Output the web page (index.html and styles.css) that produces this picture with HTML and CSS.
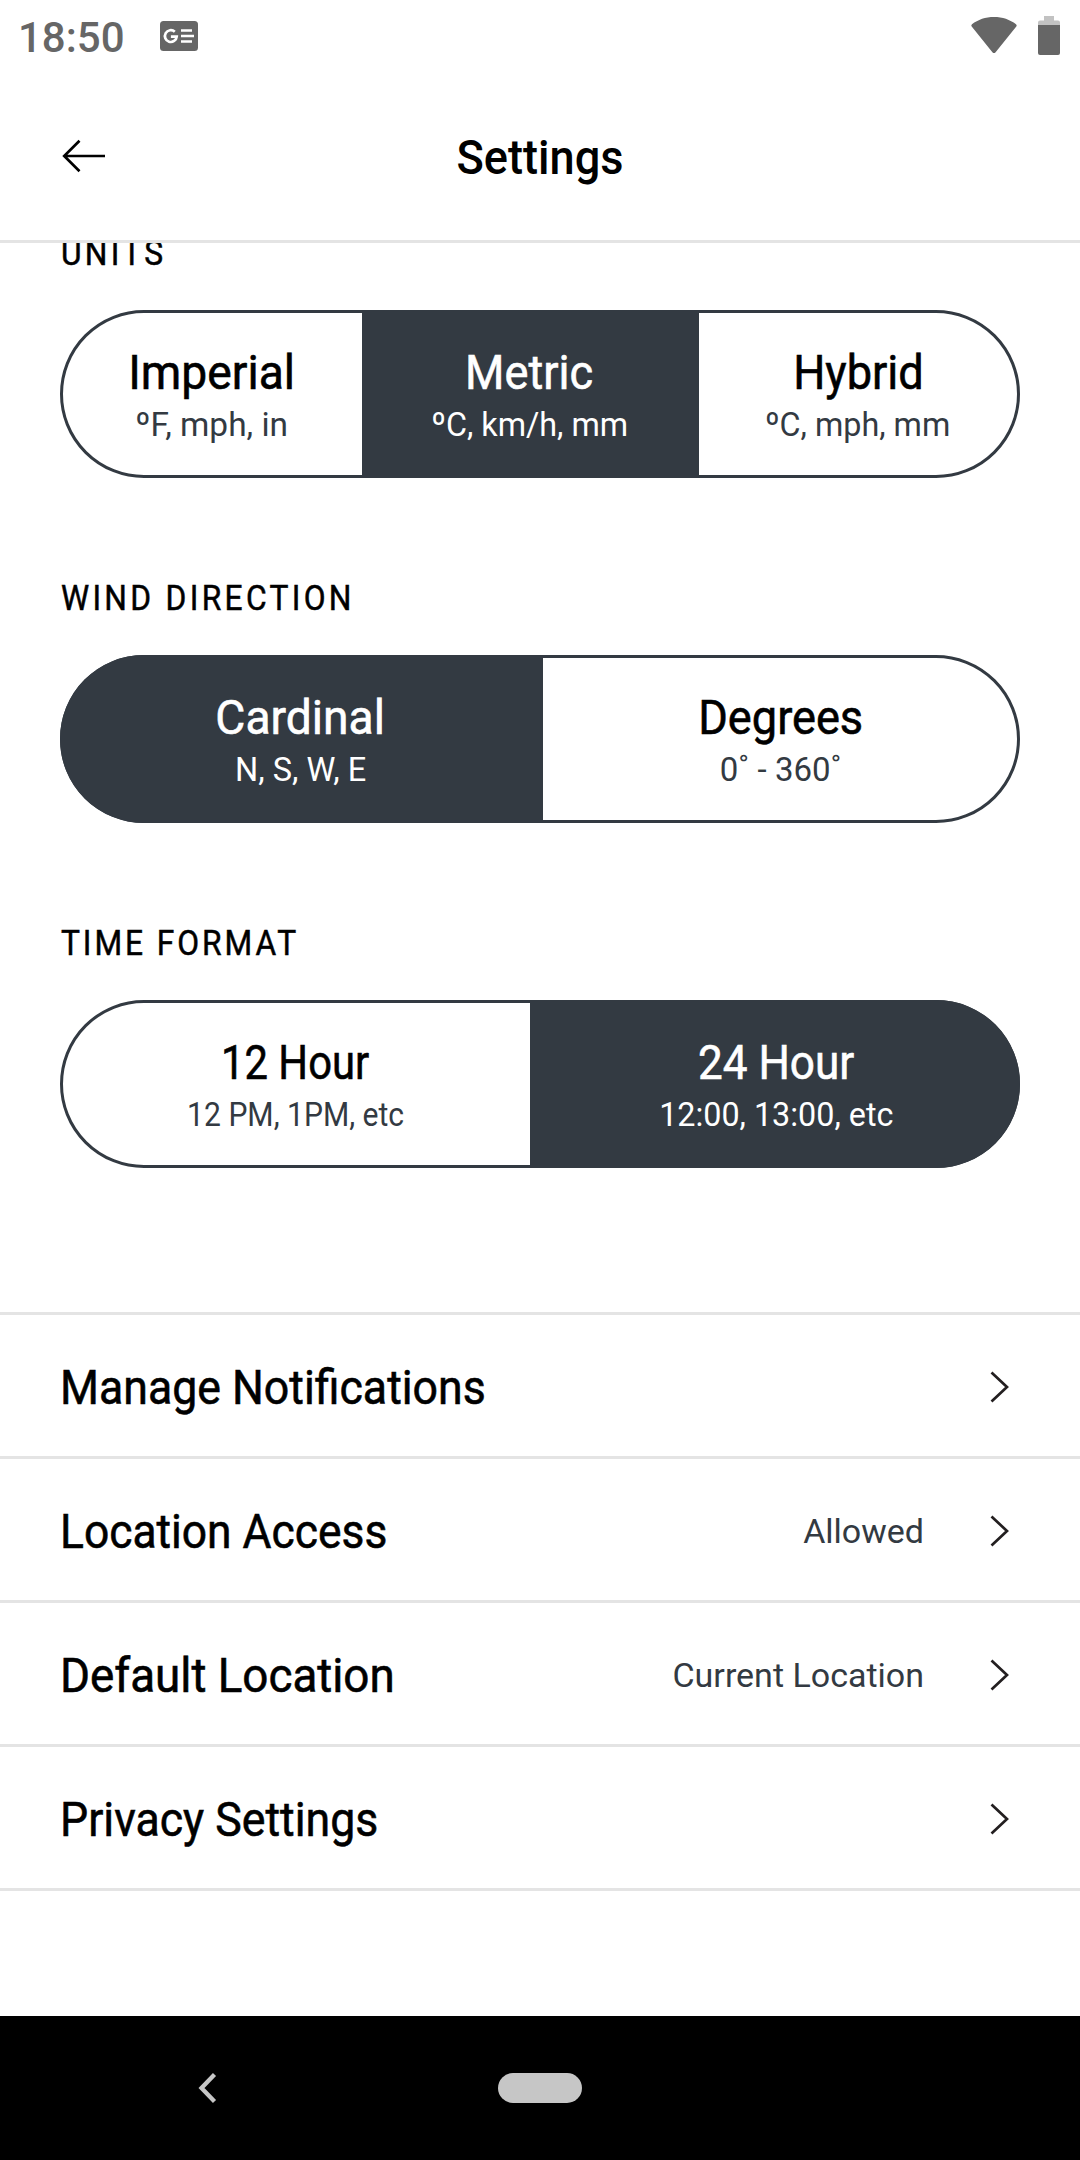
FILE: index.html
```html
<!DOCTYPE html>
<html lang="en">
<head>
<meta charset="utf-8">
<title>Settings</title>
<link rel="stylesheet" href="styles.css">
</head>
<body>
<div class="screen">
  <div class="statusbar">
    <span class="clock">18:50</span>
    <svg class="news" width="38" height="30" viewBox="0 0 38 30">
      <rect width="38" height="30" rx="3.5" fill="#666"/>
      <path d="M14.800 10.700A5.900 5.900 0 1 0 16.700 15.600H10.900" fill="none" stroke="#fff" stroke-width="2.700"/>
      <path d="M21 9.500h11M21 15h13M21 20.500h11" stroke="#fff" stroke-width="2.600"/>
    </svg>
    <svg class="wifi" width="46" height="37" viewBox="0 0 46 37">
      <path d="M1 7.200C7 2.600 14.500 0 23 0s16 2.600 22 7.200q1.200 1.200 0.300 2.400L24.600 35.200q-1.600 1.800-3.200 0L0.700 9.600q-0.900-1.200 0.300-2.400z" fill="#666"/>
    </svg>
    <svg class="battery" width="22" height="39" viewBox="0 0 22 39">
      <path d="M6 0h10v4.500h4a2 2 0 0 1 2 2V9H0V6.500a2 2 0 0 1 2-2h4z" fill="#c2c2c2"/>
      <path d="M0 9h22v28a2 2 0 0 1-2 2H2a2 2 0 0 1-2-2z" fill="#666"/>
    </svg>
  </div>
  <header class="header">
    <svg class="back" width="44" height="34" viewBox="0 0 44 34">
      <path d="M43 17H2.200M17.500 1.800L2.200 17l15.300 15.200"/>
    </svg>
    <h1 class="page-title">Settings</h1>
  </header>
  <main class="content">
    <section class="group">
      <h2 class="label">UNITS</h2>
      <div class="segmented units">
        <div class="seg imperial"><span class="name">Imperial</span><span class="hint">ºF, mph, in</span></div>
        <div class="seg metric on"><span class="name">Metric</span><span class="hint">ºC, km/h, mm</span></div>
        <div class="seg hybrid"><span class="name">Hybrid</span><span class="hint">ºC, mph, mm</span></div>
      </div>
    </section>
    <section class="group">
      <h2 class="label">WIND DIRECTION</h2>
      <div class="segmented wind">
        <div class="seg cardinal on"><span class="name">Cardinal</span><span class="hint">N, S, W, E</span></div>
        <div class="seg degrees"><span class="name">Degrees</span><span class="hint">0˚ - 360˚</span></div>
      </div>
    </section>
    <section class="group">
      <h2 class="label time-label">TIME FORMAT</h2>
      <div class="segmented time">
        <div class="seg hour12"><span class="name">12 Hour</span><span class="hint">12 PM, 1PM, etc</span></div>
        <div class="seg hour24 on"><span class="name">24 Hour</span><span class="hint">12:00, 13:00, etc</span></div>
      </div>
    </section>
    <nav class="list">
      <div class="row"><span class="item">Manage Notifications</span><svg class="chev" width="20" height="34" viewBox="0 0 20 34"><path d="M2.500 2.500L18 17 2.500 31.500"/></svg></div>
      <div class="row"><span class="item access">Location Access</span><span class="value">Allowed</span><svg class="chev" width="20" height="34" viewBox="0 0 20 34"><path d="M2.500 2.500L18 17 2.500 31.500"/></svg></div>
      <div class="row"><span class="item default">Default Location</span><span class="value">Current Location</span><svg class="chev" width="20" height="34" viewBox="0 0 20 34"><path d="M2.500 2.500L18 17 2.500 31.500"/></svg></div>
      <div class="row"><span class="item">Privacy Settings</span><svg class="chev" width="20" height="34" viewBox="0 0 20 34"><path d="M2.500 2.500L18 17 2.500 31.500"/></svg></div>
    </nav>
  </main>
  <div class="navbar">
    <svg width="20" height="32" viewBox="0 0 20 32"><path d="M17.500 2.500L4.500 16l13 13.500" fill="none" stroke="#c6c6c6" stroke-width="4.300"/></svg>
    <div class="home"></div>
  </div>
</div>
</body>
</html>
```
FILE: styles.css
```css
* { box-sizing: border-box; }

body {
  margin: 0;
  background: #fff;
  color: #000;
  font-family: Roboto, sans-serif;
}

h1, h2 { margin: 0; }

.screen {
  width: 1080px;
  height: 2160px;
  display: flex;
  flex-direction: column;
  overflow: hidden;
}

.statusbar {
  height: 72px;
  display: flex;
  align-items: flex-start;
  padding: 0 20px 0 18px;
}

.clock {
  width: 142px;
  padding-top: 13px;
  font-size: 42px;
  line-height: 50px;
  font-weight: 500;
  color: #666;
}

.news { margin-top: 21px; }
.wifi { margin: 17px 21px 0 auto; }
.battery { margin-top: 16px; }

.header {
  height: 171px;
  border-bottom: 3px solid #e4e4e4;
  display: grid;
  grid-template-columns: 200px 1fr 200px;
  align-items: start;
}

.back {
  margin: 67px 0 0 62px;
  fill: none;
  stroke: #000;
  stroke-width: 2.7;
}

.page-title {
  padding-top: 61px;
  font-size: 48px;
  line-height: 50px;
  font-weight: 500;
  text-align: center;
  transform: scaleX(0.94);
}

.content {
  flex: 1;
  overflow: hidden;
}

.group {
  margin: 0 60px 100px;
}

.group:first-child { margin-top: -10px; }

.label {
  height: 77px;
  padding-left: 1px;
  font-size: 34.5px;
  line-height: 40px;
  font-weight: 400;
  letter-spacing: 3.6px;
  transform: scaleX(0.92);
  transform-origin: left;
  -webkit-text-stroke: 0.5px #000;
}

.time-label { letter-spacing: 3.2px; }

.segmented {
  height: 168px;
  display: grid;
  border: 3px solid #333a42;
  border-radius: 84px;
}

.units { grid-template-columns: 299px 337px 1fr; }
.wind { grid-template-columns: 480px 1fr; }
.time { grid-template-columns: 467px 1fr; }

.seg {
  display: flex;
  flex-direction: column;
  align-items: center;
  gap: 7px;
  padding: 36px 2px 0 0;
}

.name {
  font-size: 48px;
  line-height: 48px;
  transform: scaleX(0.94);
  -webkit-text-stroke: 0.6px currentColor;
}

.hint {
  font-size: 34px;
  line-height: 40px;
  color: #333a42;
  transform: scaleX(0.95);
}

.imperial .name, .cardinal .name { transform: scaleX(0.962); }
.imperial .hint { transform: scaleX(0.983); }
.cardinal .hint { transform: scaleX(0.956); }
.degrees .hint { transform: scaleX(0.971); }
.hour12 .name { transform: scaleX(0.87); }
.hour12 .hint { transform: scaleX(0.885); }
.hour24 .name { transform: scaleX(0.918); }

.on { background: #333a42; }
.on .name, .on .hint { color: #fff; }

.cardinal {
  margin: -3px 0 -3px -3px;
  padding-top: 39px;
  border-radius: 84px 0 0 84px;
}

.degrees { padding: 36px 0 0 2px; }
.hybrid { padding-right: 0; }

.hour24 {
  margin: -3px -3px -3px 0;
  padding: 39px 0 0 2px;
  border-radius: 0 84px 84px 0;
}

.list {
  margin-top: 144px;
  border-top: 3px solid #e4e4e4;
}

.row {
  height: 144px;
  display: flex;
  align-items: center;
  padding: 3px 71px 0 60px;
  border-bottom: 3px solid #e4e4e4;
}

.item {
  flex: 1;
  font-size: 48px;
  transform: scaleX(0.93);
  transform-origin: left;
  -webkit-text-stroke: 0.6px currentColor;
}

.access { transform: scaleX(0.924); }
.default { transform: scaleX(0.953); }

.value {
  margin-right: 65px;
  font-size: 34px;
  color: #333a42;
}

.chev {
  fill: none;
  stroke: #231f20;
  stroke-width: 2.7;
}

.navbar {
  height: 144px;
  display: flex;
  align-items: center;
  padding-left: 197px;
  background: #000;
}

.home {
  width: 84px;
  height: 30px;
  margin-left: 281px;
  border-radius: 15px;
  background: #c6c6c6;
}
```
